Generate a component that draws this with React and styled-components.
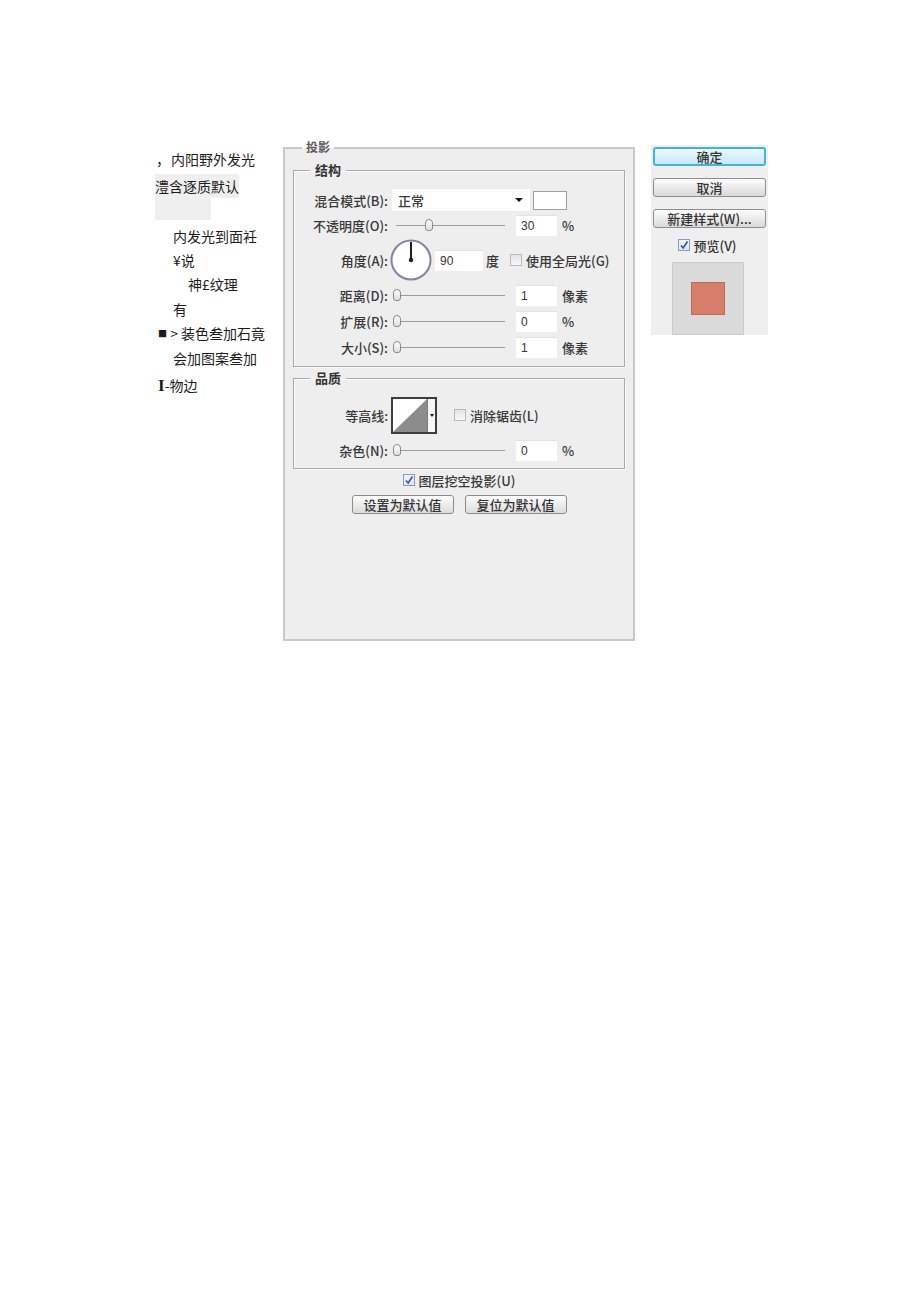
import React from "react";
import styled, { createGlobalStyle } from "styled-components";

const GlobalStyle = createGlobalStyle`
  html, body {
    margin: 0;
    padding: 0;
    background: #ffffff;
  }
  body {
    font-family: "Noto Sans CJK SC", "Noto Sans", sans-serif;
    color: #222;
  }
`;

const CJK = `"Noto Sans CJK SC", "Noto Sans", sans-serif`;

function Slider({ pos }) {
  return (
    <Track>
      <Thumb $pos={pos} />
    </Track>
  );
}

function Check({ checked }) {
  return (
    <Box $checked={checked}>
      {checked && (
        <svg width="10" height="10" viewBox="0 0 10 10">
          <path d="M2 5.5 L4.2 8 L8.5 1.5" fill="none" stroke="#3550b8" strokeWidth="1.6" />
        </svg>
      )}
    </Box>
  );
}

function SliderRow({ label, pos, value, unit }) {
  return (
    <Row $h={26}>
      <Label>{label}</Label>
      <Slider pos={pos} />
      <Field $w={41} $ml={11}>{value}</Field>
      <Unit>{unit}</Unit>
    </Row>
  );
}

export default function App() {
  return (
    <>
      <GlobalStyle />
      <Page>
        <LeftList>
          <Item $top={0} $indent={0}>
            <Comma>，</Comma>内阳野外发光
          </Item>
          <Item $top={3} $indent={0} $shaded>
            澧含逐质默认
          </Item>
          <Blank />
          <Item $top={4} $indent={18}>内发光到面衽</Item>
          <Item $top={0} $indent={18}>¥说</Item>
          <Item $top={0} $indent={33}>神£纹理</Item>
          <Item $top={1} $indent={18}>有</Item>
          <Item $top={0} $indent={3}>
            <Square>■</Square> &gt; 装色叁加石竟
          </Item>
          <Item $top={1} $indent={18}>会加图案叁加</Item>
          <Item $top={3} $indent={3}>
            <BigI>I</BigI>-物边
          </Item>
        </LeftList>

        <Dialog>
          <TopLegend>投影</TopLegend>

          <Group>
            <Legend>结构</Legend>
            <GroupBody $pt={10} $pb={6}>
              <Row $h={24}>
                <Label>混合模式(B):</Label>
                <Select>
                  <span>正常</span>
                  <Caret />
                </Select>
                <Swatch />
              </Row>
              <SliderRow label="不透明度(O):" pos={30} value="30" unit="%" />
              <Row $h={44}>
                <Label>角度(A):</Label>
                <Dial>
                  <svg width="42" height="42" viewBox="0 0 42 42">
                    <circle cx="21" cy="21" r="19.5" fill="#fff" stroke="#7f85a3" strokeWidth="2" />
                    <line x1="21" y1="21" x2="21" y2="3" stroke="#1e1e1e" strokeWidth="2" />
                    <circle cx="21" cy="21" r="2.2" fill="#1e1e1e" />
                  </svg>
                </Dial>
                <Field $w={48} $ml={3}>90</Field>
                <Unit $ml={3}>度</Unit>
                <CheckWrap $ml={11}>
                  <Check />
                  <CheckText>使用全局光(G)</CheckText>
                </CheckWrap>
              </Row>
              <SliderRow label="距离(D):" pos={1} value="1" unit="像素" />
              <SliderRow label="扩展(R):" pos={1} value="0" unit="%" />
              <SliderRow label="大小(S):" pos={1} value="1" unit="像素" />
            </GroupBody>
          </Group>

          <Group $mt={3}>
            <Legend>品质</Legend>
            <GroupBody $pt={10} $pb={2}>
              <Row $h={38}>
                <Label>等高线:</Label>
                <Contour>
                  <ContourPic>
                    <svg width="34" height="33" viewBox="0 0 34 33" preserveAspectRatio="none">
                      <polygon points="0,33 34,0 34,33" fill="#8c8c8c" />
                    </svg>
                  </ContourPic>
                  <ContourDrop>
                    <Caret $small />
                  </ContourDrop>
                </Contour>
                <CheckWrap $ml={17}>
                  <Check />
                  <CheckText>消除锯齿(L)</CheckText>
                </CheckWrap>
              </Row>
              <Row $h={32}>
                <Label>杂色(N):</Label>
                <Slider pos={1} />
                <Field $w={41} $ml={11}>0</Field>
                <Unit>%</Unit>
              </Row>
            </GroupBody>
          </Group>

          <Center $mt={1} $h={20}>
            <CheckWrap>
              <Check checked />
              <CheckText>图层挖空投影(U)</CheckText>
            </CheckWrap>
          </Center>

          <Center $mt={5} $gap={11}>
            <DlgButton>设置为默认值</DlgButton>
            <DlgButton>复位为默认值</DlgButton>
          </Center>
        </Dialog>

        <SidePanel>
          <PanelButton $primary>确定</PanelButton>
          <PanelButton>取消</PanelButton>
          <PanelButton>新建样式(W)...</PanelButton>
          <PreviewToggle>
            <Check checked />
            <CheckText>预览(V)</CheckText>
          </PreviewToggle>
          <Preview>
            <PreviewSwatch />
          </Preview>
        </SidePanel>
      </Page>
    </>
  );
}

const Page = styled.div`
  display: flex;
  align-items: flex-start;
  padding: 147px 0 0 155px;
  min-height: 1301px;
  box-sizing: border-box;
`;

const LeftList = styled.div`
  width: 128px;
  display: flex;
  flex-direction: column;
  align-items: flex-start;
  font-family: ${CJK};
  font-size: 14px;
  color: #1c1c1c;
`;

const Item = styled.div`
  line-height: 24px;
  height: 24px;
  margin-top: ${(p) => p.$top}px;
  padding-left: ${(p) => p.$indent}px;
  background: ${(p) => (p.$shaded ? "#efefef" : "transparent")};
  white-space: nowrap;
`;

const Comma = styled.span`
  display: inline-block;
  width: 15px;
  padding-left: 1px;
`;

const Blank = styled.div`
  width: 56px;
  height: 22px;
  background: #efefef;
`;

const Square = styled.span`
  font-size: 9px;
  vertical-align: 2px;
`;

const BigI = styled.span`
  font-family: "Liberation Serif", serif;
  font-weight: bold;
  font-size: 17px;
`;

const Dialog = styled.div`
  position: relative;
  width: 352px;
  height: 494px;
  box-sizing: border-box;
  border: 2px solid #c9c9c9;
  background: #eeeeee;
  padding: 13px 8px 0 8px;
  font-family: ${CJK};
  font-size: 13px;
  color: #383838;
`;

const TopLegend = styled.div`
  position: absolute;
  top: -9px;
  left: 17px;
  padding: 0 4px;
  line-height: 14px;
  font-size: 12px;
  font-weight: 700;
  color: #5a5a5a;
  background: linear-gradient(#ffffff 0 8px, #eeeeee 8px);
`;

const Group = styled.fieldset`
  margin: ${(p) => p.$mt || 0}px 0 0 0;
  padding: 0;
  min-width: 0;
  border: 1px solid #a9a9a9;
  box-shadow: 1px 1px 0 #fafafa, inset 1px 1px 0 #fafafa;
`;

const Legend = styled.legend`
  margin-left: 16px;
  padding: 0 5px;
  line-height: 16px;
  font-size: 13px;
  font-weight: 700;
  color: #333;
`;

const GroupBody = styled.div`
  display: flex;
  flex-direction: column;
  padding: ${(p) => p.$pt}px 0 ${(p) => p.$pb}px 0;
`;

const Row = styled.div`
  display: flex;
  align-items: center;
  height: ${(p) => p.$h}px;
`;

const Label = styled.div`
  width: 94px;
  flex: none;
  text-align: right;
  white-space: nowrap;
  font-weight: 500;
`;

const Select = styled.div`
  margin-left: 4px;
  width: 138px;
  height: 22px;
  box-sizing: border-box;
  background: #ffffff;
  display: flex;
  align-items: center;
  justify-content: space-between;
  padding: 0 7px 0 6px;
  font-weight: 500;
`;

const Caret = styled.span`
  width: 0;
  height: 0;
  border-left: ${(p) => (p.$small ? 2 : 4)}px solid transparent;
  border-right: ${(p) => (p.$small ? 2 : 4)}px solid transparent;
  border-top: ${(p) => (p.$small ? 3 : 4)}px solid #111;
`;

const Swatch = styled.div`
  margin-left: 3px;
  width: 34px;
  height: 19px;
  box-sizing: border-box;
  border: 1px solid #a0a0a0;
  background: #ffffff;
`;

const Track = styled.div`
  position: relative;
  margin-left: 8px;
  width: 109px;
  height: 1px;
  background: #9c9c9c;
`;

const Thumb = styled.div`
  position: absolute;
  top: -6px;
  left: calc(${(p) => p.$pos}% - 4px);
  width: 8px;
  height: 12px;
  box-sizing: border-box;
  border: 1px solid #8a8a8a;
  border-radius: 4px 4px 3px 3px;
  background: linear-gradient(#ffffff, #dedede);
`;

const Field = styled.div`
  margin-left: ${(p) => p.$ml}px;
  width: ${(p) => p.$w}px;
  height: 21px;
  box-sizing: border-box;
  background: #ffffff;
  border-top: 1px solid #e2e2e2;
  padding-left: 5px;
  line-height: 20px;
  font-family: "Liberation Sans", Arial, sans-serif;
  font-size: 12px;
  color: #333;
`;

const Unit = styled.div`
  margin-left: ${(p) => p.$ml || 5}px;
  font-weight: 500;
  white-space: nowrap;
`;

const Dial = styled.div`
  margin-left: 2px;
  width: 42px;
  height: 42px;
  display: flex;
`;

const CheckWrap = styled.div`
  margin-left: ${(p) => p.$ml || 0}px;
  display: flex;
  align-items: center;
  gap: 4px;
`;

const Box = styled.div`
  width: 12px;
  height: 12px;
  box-sizing: border-box;
  border: 1px solid ${(p) => (p.$checked ? "#8f9ab5" : "#b9b9b9")};
  background: ${(p) => (p.$checked ? "linear-gradient(#f3f5fb, #dde3f0)" : "linear-gradient(#e4e4e4, #f8f8f8)")};
  display: flex;
  align-items: center;
  justify-content: center;
`;

const CheckText = styled.span`
  white-space: nowrap;
  font-weight: 500;
`;

const Contour = styled.div`
  margin-left: 3px;
  width: 46px;
  height: 37px;
  box-sizing: border-box;
  border: 2px solid #3d3d3d;
  display: flex;
  background: #ffffff;
`;

const ContourPic = styled.div`
  flex: 1;
  display: flex;
`;

const ContourDrop = styled.div`
  width: 8px;
  border-left: 1px solid #7c7c7c;
  background: #f6f6f6;
  display: flex;
  align-items: center;
  justify-content: center;
`;

const Center = styled.div`
  margin-top: ${(p) => p.$mt}px;
  height: ${(p) => (p.$h ? `${p.$h}px` : "auto")};
  display: flex;
  align-items: center;
  justify-content: center;
  gap: ${(p) => p.$gap || 0}px;
`;

const DlgButton = styled.div`
  width: 102px;
  height: 19px;
  box-sizing: border-box;
  border: 1px solid #8c8c8c;
  border-radius: 3px;
  background: linear-gradient(#fdfdfd, #dcdcdc);
  text-align: center;
  line-height: 17px;
  font-weight: 500;
  color: #333;
`;

const SidePanel = styled.div`
  margin: -2px 0 0 16px;
  width: 117px;
  box-sizing: border-box;
  padding: 2px 2px 0 2px;
  background: #efefef;
  display: flex;
  flex-direction: column;
  align-items: center;
  font-family: ${CJK};
  font-size: 13px;
  color: #333;
`;

const PanelButton = styled.div`
  width: 113px;
  height: 19px;
  margin-bottom: 12px;
  box-sizing: border-box;
  border: ${(p) => (p.$primary ? "2px solid #45b3df" : "1px solid #8e8e8e")};
  border-radius: 3px;
  background: ${(p) =>
    p.$primary ? "linear-gradient(#eef9fd, #c6e9f7)" : "linear-gradient(#fdfdfd, #d9d9d9)"};
  text-align: center;
  line-height: ${(p) => (p.$primary ? 15 : 17)}px;
  font-weight: 500;
  white-space: nowrap;
`;

const PreviewToggle = styled.div`
  margin: -4px 5px 0 0;
  height: 18px;
  display: flex;
  align-items: center;
  gap: 4px;
`;

const Preview = styled.div`
  margin: 8px 4px 0 0;
  width: 72px;
  height: 73px;
  box-sizing: border-box;
  border: 1px solid #cbcbcb;
  background: #dadada;
  display: flex;
  align-items: center;
  justify-content: center;
`;

const PreviewSwatch = styled.div`
  width: 34px;
  height: 33px;
  box-sizing: border-box;
  border: 1px solid #b96a5b;
  background: #d77d6c;
`;
